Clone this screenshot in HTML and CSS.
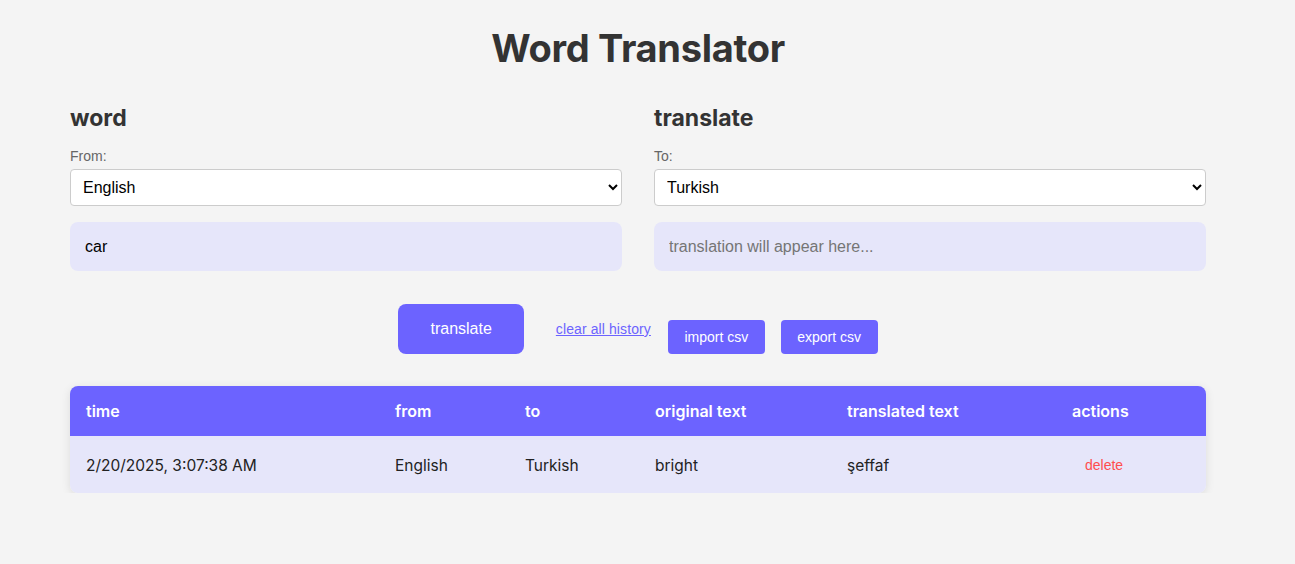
FILE: index.html
```html
<!DOCTYPE html>
<html lang="en">
<head>
<meta charset="utf-8">
<title>Word Translator</title>
<link rel="stylesheet" href="styles.css">
</head>
<body>
<div class="page">
  <h1 class="title">Word Translator</h1>
  <div class="columns">
    <section class="col">
      <h2 class="col-title">word</h2>
      <label class="lbl" for="from">From:</label>
      <select id="from" class="sel"><option>English</option><option>Turkish</option></select>
      <input class="box" type="text" value="car">
    </section>
    <section class="col">
      <h2 class="col-title">translate</h2>
      <label class="lbl" for="to">To:</label>
      <select id="to" class="sel"><option>Turkish</option><option>English</option></select>
      <input class="box" type="text" placeholder="translation will appear here..." readonly>
    </section>
  </div>
  <div class="actions">
    <button class="btn-main">translate</button>
    <a class="clear" href="#">clear all history</a>
    <button class="btn-sm btn-import">import csv</button>
    <button class="btn-sm">export csv</button>
  </div>
  <div class="table-wrap">
    <table class="history">
      <thead>
        <tr>
          <th class="c-time">time</th>
          <th class="c-from">from</th>
          <th class="c-to">to</th>
          <th class="c-orig">original text</th>
          <th class="c-trans">translated text</th>
          <th class="c-act">actions</th>
        </tr>
      </thead>
      <tbody>
        <tr>
          <td>2/20/2025, 3:07:38 AM</td>
          <td>English</td>
          <td>Turkish</td>
          <td>bright</td>
          <td>şeffaf</td>
          <td><button class="del">delete</button></td>
        </tr>
      </tbody>
    </table>
  </div>
</div>
</body>
</html>
```

FILE: styles.css
```css
html, body {
  margin: 0;
  padding: 0;
  background: #f4f4f4;
}
body {
  font-family: "Liberation Sans", Arial, sans-serif;
  color: #333;
}
.page {
  width: 1136px;
  margin-left: 70px;
  padding-top: 24px;
}
.title {
  font-family: Inter, sans-serif;
  font-weight: 700;
  font-size: 38px;
  letter-spacing: -0.3px;
  line-height: 48px;
  text-align: center;
  margin: 0 0 32px;
  color: #333;
}
.columns {
  display: flex;
  gap: 32px;
}
.col {
  flex: 1;
  display: flex;
  flex-direction: column;
}
.col-title {
  font-family: Inter, sans-serif;
  font-weight: 700;
  font-size: 23px;
  line-height: 29px;
  margin: 0 0 15px;
  color: #333;
}
.lbl {
  font-size: 14px;
  line-height: 16px;
  color: #666;
  margin-bottom: 5px;
}
.sel {
  height: 37px;
  font-family: "Liberation Sans", Arial, sans-serif;
  font-size: 16px;
  padding: 0 8px;
  border: 1px solid #ccc;
  border-radius: 4px;
  background: #fff;
  color: #000;
  margin-bottom: 16px;
}
.box {
  box-sizing: border-box;
  height: 49px;
  padding: 0 15px;
  border: none;
  border-radius: 8px;
  background: #e6e6fa;
  font-family: "Liberation Sans", Arial, sans-serif;
  font-size: 16px;
  color: #000;
  outline: none;
}
.box::placeholder {
  color: #757575;
}
.actions {
  display: flex;
  justify-content: center;
  align-items: flex-start;
  margin-top: 33px;
}
.btn-main {
  height: 50px;
  padding: 0 32px;
  border: none;
  border-radius: 8px;
  background: #6c63ff;
  color: #fff;
  font-family: "Liberation Sans", Arial, sans-serif;
  font-size: 16px;
}
.clear {
  margin-left: 32px;
  margin-top: 17px;
  font-size: 14px;
  letter-spacing: 0.1px;
  line-height: 16px;
  color: #6c63ff;
  text-decoration: underline;
}
.btn-sm {
  height: 34px;
  padding: 0 16.5px;
  margin-top: 16px;
  border: none;
  border-radius: 4px;
  background: #6c63ff;
  color: #fff;
  font-family: "Liberation Sans", Arial, sans-serif;
  font-size: 14px;
  margin-left: 16px;
}
.btn-import {
  margin-left: 17px;
}
.table-wrap {
  margin-top: 32px;
  border-radius: 8px;
  overflow: hidden;
  box-shadow: 0 2px 10px rgba(0, 0, 0, 0.1);
}
.history {
  width: 100%;
  border-collapse: collapse;
  table-layout: fixed;
  font-family: Inter, sans-serif;
  font-size: 15.5px;
}
.history th {
  box-sizing: border-box;
  height: 50px;
  padding: 0 16px;
  background: #6c63ff;
  color: #fff;
  font-size: 16px;
  font-weight: 600;
  text-align: left;
}
.history td {
  height: 56px;
  padding: 1px 16px 0;
  background: #e6e6fa;
  color: #222;
}
.c-time { width: 309px; }
.c-from { width: 130px; }
.c-to { width: 130px; }
.c-orig { width: 192px; }
.c-trans { width: 225px; }
.c-act { width: 150px; }
.del {
  border: none;
  background: transparent;
  color: #ff4d4d;
  font-family: "Liberation Sans", Arial, sans-serif;
  font-size: 14px;
  padding: 4px 13px;
}
```
